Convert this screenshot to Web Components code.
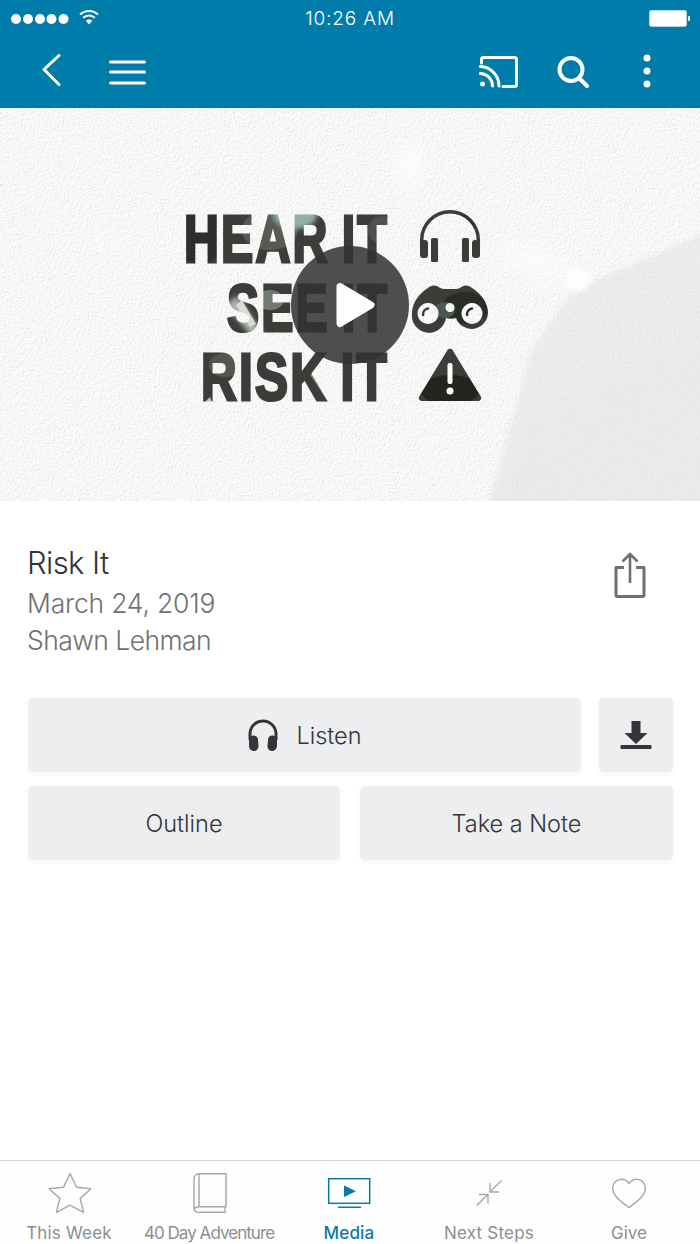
<!DOCTYPE html>
<html lang="en">
<head>
<meta charset="utf-8">
<title>Risk It</title>
<style>
  html, body { margin: 0; padding: 0; background: #fff; }
  body { font-family: "Inter", "Liberation Sans", sans-serif; }
</style>
</head>
<body>
<app-screen>
  <top-bar></top-bar>
  <sermon-hero></sermon-hero>
  <sermon-info title-text="Risk It" date="March 24, 2019" speaker="Shawn Lehman"></sermon-info>
  <action-row>
    <action-button label="Listen">
      <svg slot="icon" width="32" height="32" viewBox="0 0 32 32"><path d="M3 21V15a13 13 0 0 1 26 0v6" fill="none" stroke="#333538" stroke-width="3"/><path d="M2 20.500c0-2.500 2-4 4.500-4 3 0 4.500 2 4.500 4.500l.5 5.500c.2 3-1.800 5.500-4.500 5.500-3 0-5-2.500-5-5.500z" fill="#333538"/><path d="M30 20.500c0-2.500-2-4-4.500-4-3 0-4.500 2-4.500 4.500l-.5 5.500c-.2 3 1.800 5.500 4.500 5.500 3 0 5-2.500 5-5.500z" fill="#333538"/></svg>
    </action-button>
    <action-button>
      <svg slot="icon" width="32" height="30" viewBox="0 0 32 30"><path d="M11.500 1h9v12h7L16 24 4.500 13h7z" fill="#333538"/><rect x="0.500" y="25" width="31" height="4" rx="1" fill="#333538"/></svg>
    </action-button>
  </action-row>
  <action-row even>
    <action-button label="Outline"></action-button>
    <action-button label="Take a Note"></action-button>
  </action-row>
  <tab-bar>
    <tab-item label="This Week" spacing="0.2">
      <svg slot="icon" width="44" height="42" viewBox="47 1172 44 42"><path d="M70 1173.500l6.500 13.700 14.500 1.500-10.800 9.700 3.300 14-13.500-7.300-13.500 7.300 3.300-14L49 1188.700l14.500-1.500z" fill="none" stroke="#a9a9a9" stroke-width="1.500" stroke-linejoin="round"/></svg>
    </tab-item>
    <tab-item label="40 Day Adventure" spacing="-0.95">
      <svg slot="icon" width="38" height="42" viewBox="190 1172 38 42"><path d="M199 1173.700h27v33h-27c-2.500 0-5 1.500-5 3.300V1179c0-3 2.500-5.300 5-5.300zM199 1173.700v33M194 1209c0 2.300 2 3.300 5 3.300h27M226 1206.700c-1.500 1.500-1.500 4 0 5.600" fill="none" stroke="#a9a9a9" stroke-width="1.500" stroke-linejoin="round"/></svg>
    </tab-item>
    <tab-item label="Media" spacing="0.2" active>
      <svg slot="icon" width="44" height="42" viewBox="327 1172 44 42"><rect x="328.700" y="1178.700" width="41" height="24.600" fill="none" stroke="#0a7ba8" stroke-width="1.500"/><path d="M344 1185.500l12 5.700-12 5.800z" fill="#0a7ba8"/><rect x="338" y="1206.500" width="23" height="1.500" fill="#0a7ba8"/></svg>
    </tab-item>
    <tab-item label="Next Steps" spacing="0.2">
      <svg slot="icon" width="44" height="42" viewBox="467 1172 44 42"><path d="M501.500 1180.500l-11.500 11.500M490 1183v9h9M476.700 1205.500l11.500-11.500M479 1194.500h9v9" fill="none" stroke="#a9a9a9" stroke-width="1.400"/></svg>
    </tab-item>
    <tab-item label="Give">
      <svg slot="icon" width="44" height="42" viewBox="607 1172 44 42"><path d="M629 1207.500c-6-4.500-16.300-11-16.300-19.300 0-5.300 4-9 8.800-9 3 0 5.800 1.700 7.500 4.500 1.700-2.800 4.500-4.500 7.500-4.500 4.800 0 8.800 3.700 8.800 9 0 8.300-10.300 14.800-16.300 19.300z" fill="none" stroke="#a9a9a9" stroke-width="1.500" stroke-linejoin="round"/></svg>
    </tab-item>
  </tab-bar>
</app-screen>

<script>
class AppScreen extends HTMLElement {
  constructor() {
    super();
    this.attachShadow({ mode: 'open' });
  }

  connectedCallback() {
    this.shadowRoot.innerHTML = `
      <style>
        :host {
          display: flex;
          flex-direction: column;
          width: 700px;
          height: 1244px;
          overflow: hidden;
          background: #fff;
          color: #333538;
        }
      </style>
      <slot></slot>
    `;
  }
}

class TopBar extends HTMLElement {
  constructor() {
    super();
    this.attachShadow({ mode: 'open' });
  }

  connectedCallback() {
    this.shadowRoot.innerHTML = `
      <style>
        :host {
          display: block;
          flex: 0 0 108px;
          background: #007cab;
          color: #fff;
        }
        .status {
          height: 37px;
          display: grid;
          grid-template-columns: 1fr auto 1fr;
          align-items: center;
          padding: 0 10px 0 10px;
        }
        .signal { display: flex; align-items: center; gap: 11px; }
        .time { font-size: 19px; font-weight: 300; letter-spacing: 0.85px; line-height: 37px; }
        .battery { justify-self: end; display: block; }
        .nav {
          height: 71px;
          display: flex;
          align-items: flex-start;
          justify-content: space-between;
          padding: 0 49px 0 40px;
        }
        .group { display: flex; align-items: flex-start; }
        svg { display: block; flex: none; }
      </style>
      <div class="status">
        <div class="signal">
          <svg width="59" height="12" viewBox="0 0 59 12" fill="#fff"><circle cx="6" cy="6" r="5"/><circle cx="18" cy="6" r="5"/><circle cx="30" cy="6" r="5"/><circle cx="41.500" cy="6" r="5"/><circle cx="53.500" cy="6" r="5"/></svg>
          <svg style="margin:-3px 0 0 -1px" width="20" height="16" viewBox="0 0 20 16" fill="none" stroke="#fff" stroke-width="2"><path d="M1 5.500a13 13 0 0 1 18 0"/><path d="M4.200 8.800a8.500 8.500 0 0 1 11.600 0"/><path d="M10 15.500L6.800 11.800a4.500 4.500 0 0 1 6.400 0z" fill="#fff" stroke="none"/></svg>
        </div>
        <div class="time">10:26 AM</div>
        <svg class="battery" width="41" height="17" viewBox="0 0 41 17"><rect x="0.500" y="0.500" width="37" height="16" rx="2" fill="#fff" stroke="#b9d9e6"/><rect x="39" y="6" width="2" height="5" rx="1" fill="#fff"/></svg>
      </div>
      <div class="nav">
        <div class="group">
          <svg style="margin-top:15px" width="22" height="36" viewBox="0 0 22 36" fill="none" stroke="#fff" stroke-width="3" stroke-linecap="round" stroke-linejoin="round"><path d="M19 4L4 18l15 15" transform="translate(0 -0.500)"/></svg>
          <svg style="margin:23px 0 0 47px" width="37" height="26" viewBox="0 0 37 26" fill="none" stroke="#fff" stroke-width="3" stroke-linecap="round"><path d="M1.500 2h34M1.500 12h34M1.500 23h34"/></svg>
        </div>
        <div class="group">
          <svg style="margin-top:18px" width="40" height="33" viewBox="0 0 40 33" fill="none" stroke="#fff" stroke-width="3" stroke-linecap="round" stroke-linejoin="round"><path d="M2.500 8V4.500q0-2 2-2h31q2 0 2 2v25q0 2-2 2H24"/><path d="M1.500 11.500A19.500 19.500 0 0 1 20 31"/><path d="M1.500 18.500A12.500 12.500 0 0 1 13.500 31"/><circle cx="3.500" cy="29" r="2.500" fill="#fff" stroke="none"/></svg>
          <svg style="margin:18px 0 0 37px" width="34" height="33" viewBox="0 0 34 33" fill="none" stroke="#fff" stroke-width="4" stroke-linecap="round"><circle cx="15" cy="14.500" r="11.500"/><path d="M24 24l7 7"/></svg>
          <svg style="margin:17px 0 0 53.500px" width="8" height="34" viewBox="0 0 8 34" fill="#fff"><circle cx="4" cy="4" r="3.500"/><circle cx="4" cy="17" r="3.500"/><circle cx="4" cy="30" r="3.500"/></svg>
        </div>
      </div>
    `;
  }
}

class SermonHero extends HTMLElement {
  constructor() {
    super();
    this.attachShadow({ mode: 'open' });
  }

  connectedCallback() {
    this.shadowRoot.innerHTML = `
      <style>
        :host {
          display: block;
          flex: 0 0 393px;
          background: #f1f1f1;
          overflow: hidden;
        }
        svg { display: block; }
        text {
          font-family: "Liberation Sans", sans-serif;
          font-weight: 700;
          font-size: 66px;
          letter-spacing: 3px;
          word-spacing: -5px;
        }
      </style>
      <svg width="700" height="393" viewBox="0 108 700 393">
        <defs>
          <filter id="paper" x="0" y="0" width="100%" height="100%" color-interpolation-filters="sRGB">
            <feTurbulence type="fractalNoise" baseFrequency="0.55" numOctaves="3" seed="11"/>
            <feDiffuseLighting surfaceScale="0.7" diffuseConstant="1.08" lighting-color="#fff">
              <feDistantLight azimuth="225" elevation="66"/>
            </feDiffuseLighting>
          </filter>
          <filter id="soft" x="-50%" y="-50%" width="200%" height="200%"><feGaussianBlur stdDeviation="9"/></filter>
          <filter id="soft2" x="-50%" y="-50%" width="200%" height="200%"><feGaussianBlur stdDeviation="2.500"/></filter>
          <filter id="edge" x="-10%" y="-10%" width="120%" height="120%"><feGaussianBlur stdDeviation="2.500"/></filter>
          <pattern id="ink" patternUnits="userSpaceOnUse" x="170" y="200" width="330" height="210">
            <rect width="330" height="210" fill="#3c3c38"/>
            <ellipse cx="30" cy="35" rx="24" ry="30" fill="#2e2f2b"/>
            <ellipse cx="100" cy="30" rx="28" ry="20" fill="#565a52"/>
            <ellipse cx="125" cy="15" rx="22" ry="14" fill="#93b0a4" filter="url(#soft2)"/>
            <path d="M55 105l30 35 10-4-28-40z" fill="#a9b6ae" filter="url(#soft2)"/>
            <path d="M72 100l14 24-6 3-14-22z" fill="#d9dcd4"/>
            <ellipse cx="100" cy="100" rx="14" ry="10" fill="#6f7a70"/>
            <ellipse cx="55" cy="165" rx="16" ry="12" fill="#54574f"/>
            <path d="M32 205l8-8 4 10z" fill="#b7c8a8"/>
            <path d="M140 175l20 30 6-3-20-30z" fill="#6d7f6e"/>
            <circle cx="212" cy="30" r="14" fill="#4e524c"/>
            <ellipse cx="295" cy="108" rx="24" ry="16" fill="#2a2c28"/>
            <ellipse cx="280" cy="190" rx="30" ry="15" fill="#23261f"/>
            <ellipse cx="275" cy="110" rx="10" ry="8" fill="#4a5a50"/>
            <ellipse cx="285" cy="25" rx="20" ry="12" fill="#34342f"/>
          </pattern>
        </defs>

        <rect x="0" y="108" width="700" height="393" fill="#f5f5f5"/>
        <rect x="0" y="108" width="700" height="393" filter="url(#paper)" opacity="0.5"/>
        <path d="M720 226L575 289 531 350 484 520H720z" fill="#dedee0" opacity="0.45" filter="url(#edge)"/>
        <path d="M524 416L720 330V520H489z" fill="#e8e8e9" opacity="0.3" filter="url(#edge)"/>
        <circle cx="578" cy="280" r="12" fill="#fff" opacity="0.85" filter="url(#soft2)"/>
        <ellipse cx="535" cy="262" rx="42" ry="13" fill="#fff" opacity="0.55" filter="url(#soft)" transform="rotate(20 535 262)"/>
        <ellipse cx="410" cy="165" rx="14" ry="22" fill="#fff" opacity="0.6" filter="url(#soft)"/>
        <ellipse cx="100" cy="240" rx="20" ry="6" fill="#fff" opacity="0.5" filter="url(#soft)"/>

        <g fill="url(#ink)" stroke="url(#ink)" stroke-width="3" stroke-linejoin="miter">
          <text x="184" y="261.500" textLength="205" lengthAdjust="spacingAndGlyphs">HEAR IT</text>
          <text x="227" y="330.500" textLength="162" lengthAdjust="spacingAndGlyphs">SEE IT</text>
          <text x="201" y="399.500" textLength="188" lengthAdjust="spacingAndGlyphs">RISK IT</text>
        </g>

        <g fill="url(#ink)">
          <path d="M421.700 246V240a28.300 28.300 0 0 1 56.600 0v6" fill="none" stroke="url(#ink)" stroke-width="3.500"/>
          <rect x="420" y="240" width="8" height="18" rx="3"/>
          <rect x="431" y="238" width="7" height="24" rx="1.500"/>
          <rect x="462" y="238" width="7" height="24" rx="1.500"/>
          <rect x="472" y="240" width="8" height="18" rx="3"/>

          <path fill-rule="evenodd" d="M428 288c3-3.500 9-3.500 12 0 2 1 5 1 7 1h6c2 0 5 0 7-1 3-3.500 9-3.500 12 0 8 5 16 14 16 25a16.500 16.500 0 0 1-32 5c-3 1-7 1-10 0A16.500 16.500 0 0 1 412 313c0-11 8-20 16-25zM428 303a10.500 10.500 0 1 0 .01 0zM472 303a10.500 10.500 0 1 0 .01 0zM450 303a4.500 4.500 0 1 0 .01 0z"/>
          <path d="M423 315a6 6 0 0 1 5-6.500" fill="none" stroke="url(#ink)" stroke-width="2.500" stroke-linecap="round"/>
          <path d="M467 315a6 6 0 0 1 5-6.500" fill="none" stroke="url(#ink)" stroke-width="2.500" stroke-linecap="round"/>

          <path d="M447.500 350a3 3 0 0 1 5 0l28 46a3 3 0 0 1-2.500 5H422a3 3 0 0 1-2.500-5z"/>
        </g>
        <rect x="447.500" y="363" width="5" height="21" rx="2" fill="#fff"/>
        <circle cx="450" cy="391" r="3.500" fill="#fff"/>

        <circle cx="350" cy="305" r="59" fill="#323232" opacity="0.86"/>
        <path d="M340 286.500L371 305 340 323.500z" fill="#fff" stroke="#fff" stroke-width="7" stroke-linejoin="round"/>
      </svg>
    `;
  }
}

class SermonInfo extends HTMLElement {
  constructor() {
    super();
    this.attachShadow({ mode: 'open' });
  }

  connectedCallback() {
    this.shadowRoot.innerHTML = `
      <style>
        :host {
          display: flex;
          justify-content: space-between;
          align-items: flex-start;
          padding: 39px 54px 0 27px;
          height: 197px;
          box-sizing: border-box;
          flex: none;
        }
        .title { font-size: 31px; font-weight: 300; line-height: 45px; color: #333538; letter-spacing: -0.6px; }
        .meta { font-size: 26.500px; font-weight: 300; line-height: 37px; color: #6f7074; letter-spacing: -0.2px; }
        .speaker { letter-spacing: -0.55px; }
        svg { display: block; margin-top: 12px; }
      </style>
      <div>
        <div class="title">${this.getAttribute('title-text')}</div>
        <div class="meta">${this.getAttribute('date')}</div>
        <div class="meta speaker">${this.getAttribute('speaker')}</div>
      </div>
      <svg width="32" height="46" viewBox="0 0 32 46" fill="none" stroke="#6f7074" stroke-width="3" stroke-linejoin="round"><path d="M10 15.500H2v27.500q0 1.500 1.500 1.500h25q1.500 0 1.500-1.500V15.500h-8"/><path d="M16 2v29M8.500 9.500L16 2l7.500 7.500" stroke-width="2.600"/></svg>
    `;
  }
}

class ActionRow extends HTMLElement {
  constructor() {
    super();
    this.attachShadow({ mode: 'open' });
  }

  connectedCallback() {
    const columns = this.hasAttribute('even') ? '312px 313px' : '1fr 74px';
    const gap = this.hasAttribute('even') ? '20px' : '18px';
    this.shadowRoot.innerHTML = `
      <style>
        :host {
          display: grid;
          grid-template-columns: ${columns};
          gap: ${gap};
          padding: 0 27px 14px 28px;
          flex: none;
        }
      </style>
      <slot></slot>
    `;
  }
}

class ActionButton extends HTMLElement {
  constructor() {
    super();
    this.attachShadow({ mode: 'open' });
  }

  connectedCallback() {
    const label = this.getAttribute('label') || '';
    this.shadowRoot.innerHTML = `
      <style>
        :host {
          display: flex;
          align-items: center;
          justify-content: center;
          gap: 17px;
          height: 74px;
          background: #edeef0;
          border-radius: 5px;
          box-shadow: 0 2px 5px rgba(0, 0, 0, 0.04);
          font-size: 23.500px;
          font-weight: 350;
          color: #333538;
        }
        ::slotted(svg) { display: block; }
        span:empty { display: none; }
      </style>
      <slot name="icon"></slot>
      <span>${label}</span>
    `;
  }
}

class TabBar extends HTMLElement {
  constructor() {
    super();
    this.attachShadow({ mode: 'open' });
  }

  connectedCallback() {
    this.shadowRoot.innerHTML = `
      <style>
        :host {
          display: grid;
          grid-template-columns: repeat(5, minmax(0, 1fr));
          margin-top: auto;
          height: 84px;
          box-sizing: border-box;
          border-top: 1px solid #d6d6d6;
          background: #fefefe;
          flex: none;
        }
      </style>
      <slot></slot>
    `;
  }
}

class TabItem extends HTMLElement {
  constructor() {
    super();
    this.attachShadow({ mode: 'open' });
  }

  connectedCallback() {
    const active = this.hasAttribute('active');
    const spacing = this.getAttribute('spacing') || 0;
    this.shadowRoot.innerHTML = `
      <style>
        :host {
          display: flex;
          flex-direction: column;
          align-items: center;
          padding: 11px 2px 0 0;
          color: ${active ? '#0a7ba8' : '#8e8e8e'};
          font-size: 17px;
          line-height: 24px;
          font-weight: ${active ? 500 : 400};
        }
        ::slotted(svg) { display: block; }
        .label { margin-top: 7px; white-space: nowrap; letter-spacing: ${spacing}px; }
      </style>
      <slot name="icon"></slot>
      <div class="label">${this.getAttribute('label')}</div>
    `;
  }
}

customElements.define('app-screen', AppScreen);
customElements.define('top-bar', TopBar);
customElements.define('sermon-hero', SermonHero);
customElements.define('sermon-info', SermonInfo);
customElements.define('action-row', ActionRow);
customElements.define('action-button', ActionButton);
customElements.define('tab-bar', TabBar);
customElements.define('tab-item', TabItem);
</script>
</body>
</html>
